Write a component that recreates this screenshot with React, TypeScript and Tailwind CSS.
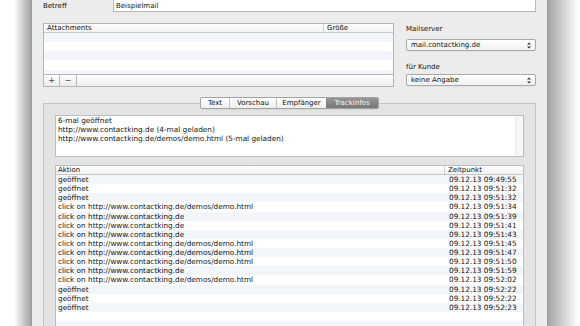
import React from "react";

const rows: [string, string][] = [
  ["geöffnet", "09.12.13 09:49:55"],
  ["geöffnet", "09.12.13 09:51:32"],
  ["geöffnet", "09.12.13 09:51:32"],
  ["click on http://www.contactking.de/demos/demo.html", "09.12.13 09:51:34"],
  ["click on http://www.contactking.de", "09.12.13 09:51:39"],
  ["click on http://www.contactking.de", "09.12.13 09:51:41"],
  ["click on http://www.contactking.de", "09.12.13 09:51:43"],
  ["click on http://www.contactking.de/demos/demo.html", "09.12.13 09:51:45"],
  ["click on http://www.contactking.de/demos/demo.html", "09.12.13 09:51:47"],
  ["click on http://www.contactking.de/demos/demo.html", "09.12.13 09:51:50"],
  ["click on http://www.contactking.de", "09.12.13 09:51:59"],
  ["click on http://www.contactking.de/demos/demo.html", "09.12.13 09:52:02"],
  ["geöffnet", "09.12.13 09:52:22"],
  ["geöffnet", "09.12.13 09:52:22"],
  ["geöffnet", "09.12.13 09:52:23"],
  ["", ""],
  ["", ""],
];

function Arrows() {
  return (
    <svg width="4" height="7" viewBox="0 0 4 7" className="shrink-0">
      <path d="M0 2.6 L2 0.4 L4 2.6 Z" fill="#333" />
      <path d="M0 4.4 L2 6.6 L4 4.4 Z" fill="#333" />
    </svg>
  );
}

function Popup({ label }: { label: string }) {
  return (
    <div className="h-[12px] rounded-[2px] border border-[#a9a9a9] bg-linear-to-b from-white to-[#f1f1f1] flex items-center pl-[4px] pr-[4px] shadow-[0_0.5px_0_rgba(0,0,0,0.08)]">
      <span className="flex-1 text-[7px] leading-[10px] text-[#111]">{label}</span>
      <Arrows />
    </div>
  );
}

export default function App() {
  return (
    <div
      className="w-[580px] h-[326px] overflow-hidden flex bg-white text-[#141414]"
      style={{ fontFamily: '"DejaVu Sans", "Liberation Sans", sans-serif' }}
    >
      {/* left shadow */}
      <div className="w-[31px] h-full bg-linear-to-r from-white from-45% to-[#a3a3a3]" />
      {/* window */}
      <div className="w-[517px] h-full bg-[#ececec] border-l border-r border-[#9a9a9a] flex flex-col px-[11px]">
        {/* Betreff row */}
        <div className="h-[12px] flex shrink-0">
          <div className="w-[70px] text-[7px] leading-[11px] pt-[1px]">Betreff</div>
          <div className="flex-1 bg-white border-l border-r border-b border-[#b8b8b8] text-[7px] leading-[11px] pt-[1px] pl-[2px]">
            Beispielmail
          </div>
        </div>

        {/* attachments + right column */}
        <div className="mt-[11px] flex shrink-0">
          <div className="w-[351px] h-[64px] border border-[#b4b4b4] bg-white flex flex-col">
            <div className="h-[9px] shrink-0 flex border-b border-[#c8c8c8] bg-linear-to-b from-white to-[#f1f1f1] text-[7px] leading-[8px]">
              <div className="w-[280px] pl-[3px] border-r border-[#d0d0d0]">Attachments</div>
              <div className="flex-1 pl-[3px]">Größe</div>
            </div>
            <div className="flex-1 flex flex-col overflow-hidden">
              {[0, 1, 2, 3, 4].map((i) => (
                <div
                  key={i}
                  className={`h-[9.14px] shrink-0 ${i % 2 === 0 ? "bg-[#f2f5fa]" : "bg-white"}`}
                />
              ))}
            </div>
            <div className="h-[12px] shrink-0 flex border-t border-[#b4b4b4] bg-linear-to-b from-white to-[#ececec] text-[8px] leading-[11px] text-[#444]">
              <div className="w-[16px] text-center border-r border-[#b4b4b4]">+</div>
              <div className="w-[17px] text-center border-r border-[#b4b4b4]">−</div>
              <div className="flex-1" />
            </div>
          </div>
          <div className="ml-[12px] flex-1 flex flex-col">
            <div className="mt-[2px] text-[7px] leading-[8px]">Mailserver</div>
            <div className="mt-[6px]">
              <Popup label="mail.contactking.de" />
            </div>
            <div className="mt-[12px] text-[7px] leading-[8px]">für Kunde</div>
            <div className="mt-[3px]">
              <Popup label="keine Angabe" />
            </div>
          </div>
        </div>

        {/* tabs */}
        <div className="mt-[10px] -mb-[6px] relative z-10 flex justify-center shrink-0">
          <div className="h-[12px] flex rounded-[2px] border border-[#a3a3a3] overflow-hidden text-[7px] leading-[10px] shadow-[0_0.5px_0_rgba(0,0,0,0.1)]">
            <div className="w-[29px] text-center bg-linear-to-b from-white to-[#eeeeee] border-r border-[#c2c2c2]">Text</div>
            <div className="w-[47px] text-center bg-linear-to-b from-white to-[#eeeeee] border-r border-[#c2c2c2]">Vorschau</div>
            <div className="w-[49px] text-center bg-linear-to-b from-white to-[#eeeeee]">Empfänger</div>
            <div className="w-[52px] text-center bg-linear-to-b from-[#969696] to-[#777777] text-[#f4f4f4]">Trackinfos</div>
          </div>
        </div>

        {/* tab box */}
        <div className="flex-1 border-t border-l border-r border-[#c4c4c4] bg-[#e3e3e3] px-[11px] pt-[11px] flex flex-col">
          <div className="h-[42px] shrink-0 bg-white border border-[#bdbdbd] flex">
            <div className="flex-1 pl-[2px] text-[7.3px] leading-[9.2px]">
              <div>6-mal geöffnet</div>
              <div>http://www.contactking.de (4-mal geladen)</div>
              <div>http://www.contactking.de/demos/demo.html (5-mal geladen)</div>
            </div>
            <div className="w-[8px] bg-[#f6f6f6] border-l border-[#ebebeb]" />
          </div>

          <div className="mt-[8px] flex-1 bg-white border-l border-r border-t border-[#bdbdbd] flex flex-col overflow-hidden">
            <div className="h-[9px] shrink-0 flex border-b border-[#c8c8c8] bg-linear-to-b from-white to-[#f1f1f1] text-[7px] leading-[8px]">
              <div className="w-[389px] pl-[2px] border-r border-[#d0d0d0]">Aktion</div>
              <div className="flex-1 pl-[3px]">Zeitpunkt</div>
            </div>
            {rows.map(([a, t], i) => (
              <div
                key={i}
                className={`h-[9.14px] shrink-0 flex text-[7.3px] leading-[9.14px] ${i % 2 === 0 ? "bg-[#f2f5fa]" : "bg-white"}`}
              >
                <div className="w-[390px] pl-[2px] whitespace-nowrap overflow-hidden">{a}</div>
                <div className="flex-1 pl-[3px] whitespace-nowrap">{t}</div>
              </div>
            ))}
          </div>
        </div>
      </div>
      {/* right shadow */}
      <div className="flex-1 h-full bg-linear-to-l from-white from-5% to-[#a6a6a6]" />
    </div>
  );
}
